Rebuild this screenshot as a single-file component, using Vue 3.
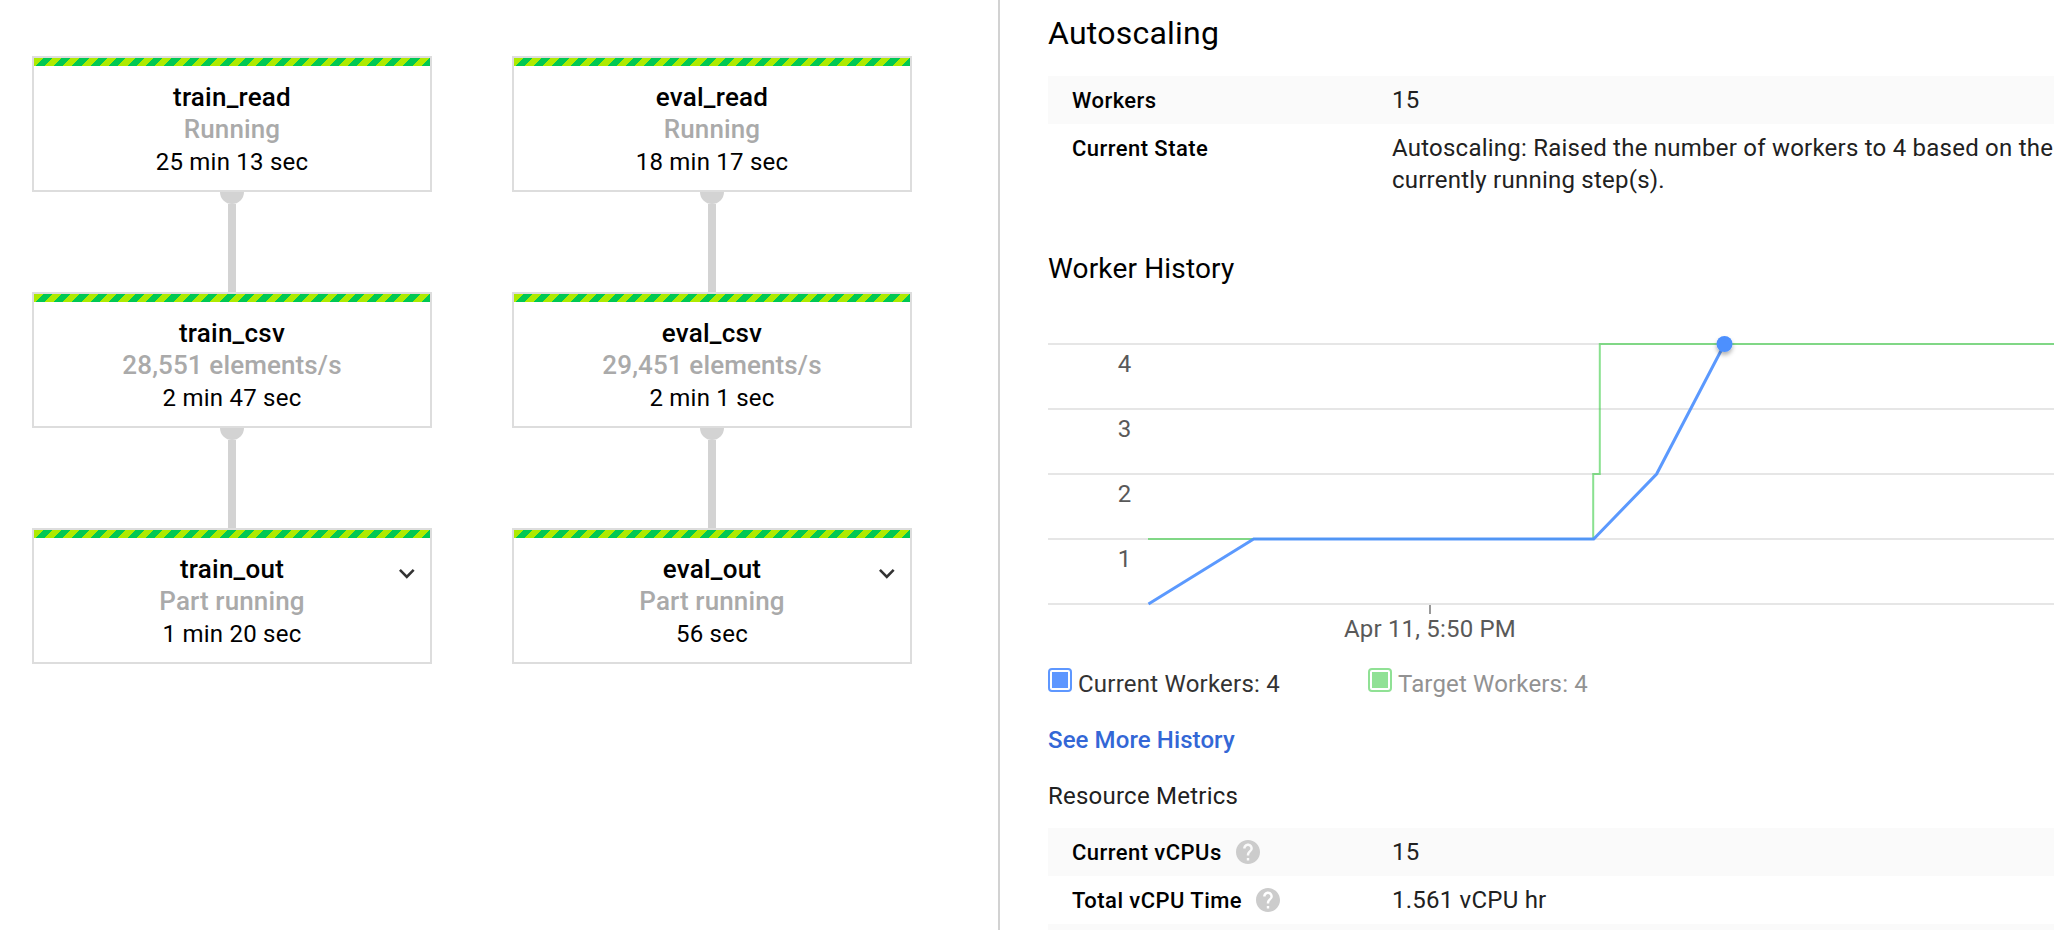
<script setup>
const pipelines = [
  [
    { name: 'train_read', status: 'Running', time: '25 min 13 sec' },
    { name: 'train_csv', status: '28,551 elements/s', time: '2 min 47 sec' },
    { name: 'train_out', status: 'Part running', time: '1 min 20 sec', expandable: true },
  ],
  [
    { name: 'eval_read', status: 'Running', time: '18 min 17 sec' },
    { name: 'eval_csv', status: '29,451 elements/s', time: '2 min 1 sec' },
    { name: 'eval_out', status: 'Part running', time: '56 sec', expandable: true },
  ],
]

const gridLines = [
  { y: 344, label: '4' },
  { y: 409, label: '3' },
  { y: 474, label: '2' },
  { y: 539, label: '1' },
  { y: 604, label: '' },
]

const metrics = [
  { label: 'Current vCPUs', value: '15' },
  { label: 'Total vCPU Time', value: '1.561 vCPU hr' },
]
</script>

<template>
  <div class="page">
    <main class="graph">
      <div v-for="(steps, p) in pipelines" :key="p" class="pipeline">
        <template v-for="(step, i) in steps" :key="step.name">
          <div v-if="i > 0" class="edge">
            <span class="port"></span>
            <span class="wire"></span>
          </div>
          <div class="step">
            <div class="stripe"></div>
            <div class="name">{{ step.name }}</div>
            <div class="status">{{ step.status }}</div>
            <div class="time">{{ step.time }}</div>
            <svg v-if="step.expandable" class="chevron" viewBox="6 8.59 12 7.41">
              <path d="M16.59 8.59L12 13.17 7.41 8.59 6 10l6 6 6-6z" fill="#333" />
            </svg>
          </div>
        </template>
      </div>
    </main>

    <aside class="details">
      <h1>Autoscaling</h1>
      <div class="row shaded">
        <span class="label">Workers</span>
        <span class="value">15</span>
      </div>
      <div class="row">
        <span class="label">Current State</span>
        <span class="value">Autoscaling: Raised the number of workers to 4 based on the<br />currently running step(s).</span>
      </div>

      <h2>Worker History</h2>
      <svg class="chart" viewBox="1048 286 1006 374">
        <defs>
          <filter id="dotShadow" x="-50%" y="-50%" width="200%" height="220%">
            <feDropShadow dx="0" dy="3" stdDeviation="2" flood-color="#000" flood-opacity="0.3" />
          </filter>
        </defs>
        <g v-for="line in gridLines" :key="line.y">
          <rect x="1048" :y="line.y - 1" width="1006" height="2" fill="#e6e6e6" />
          <text x="1131.5" :y="line.y + 28" text-anchor="end" class="tick">{{ line.label }}</text>
        </g>
        <rect x="1429" y="605" width="2" height="9" fill="#999" />
        <text x="1344" y="637" class="tick date">Apr 11, 5:50 PM</text>
        <path class="target" d="M1148 539H1593.2V474H1599.8V344H2054" />
        <path class="current" d="M1148.5 604L1253.7 539H1593.7L1656.6 474L1724.5 344" />
        <circle cx="1724.5" cy="344" r="8" fill="#4d90fe" filter="url(#dotShadow)" />
      </svg>
      <div class="legend">
        <span class="entry"><i class="swatch blue"></i>Current Workers: 4</span>
        <span class="entry muted"><i class="swatch green"></i>Target Workers: 4</span>
      </div>
      <a class="more">See More History</a>

      <h3>Resource Metrics</h3>
      <div v-for="(m, i) in metrics" :key="m.label" class="row" :class="{ shaded: i % 2 === 0 }">
        <span class="label">
          {{ m.label }}
          <svg class="help" viewBox="2 2 20 20">
            <path
              fill="#ccc"
              d="M12 2C6.48 2 2 6.48 2 12s4.480 10 10 10 10-4.480 10-10S17.520 2 12 2zm1 17h-2v-2h2v2zm2.070-7.750l-.9.920C13.450 12.900 13 13.500 13 15h-2v-.5c0-1.100.450-2.100 1.170-2.830l1.240-1.260c.370-.360.590-.860.590-1.410 0-1.100-.9-2-2-2s-2 .9-2 2H8c0-2.210 1.790-4 4-4s4 1.790 4 4c0 .880-.360 1.680-.930 2.250z"
            />
          </svg>
        </span>
        <span class="value">{{ m.value }}</span>
      </div>
      <div class="row shaded"></div>
    </aside>
  </div>
</template>

<style>
body {
  background: #fff;
}
</style>

<style scoped>
.page {
  display: flex;
  width: 2054px;
  height: 930px;
  overflow: hidden;
  background: #fff;
  font-family: Roboto, sans-serif;
  font-size: 24px;
  line-height: 32px;
  letter-spacing: 0.23px;
  color: #212121;
  white-space: nowrap;
}

.graph {
  display: flex;
  flex: none;
  gap: 80px;
  box-sizing: border-box;
  width: 998px;
  padding: 56px 32px 0;
}
.pipeline {
  width: 400px;
}
.step {
  position: relative;
  box-sizing: border-box;
  height: 136px;
  border: 2px solid #ddd;
  text-align: center;
  color: #000;
}
.stripe {
  height: 8px;
  margin-bottom: 15px;
  background: repeating-linear-gradient(135deg, #aeea00 0 6.5px, #00c853 6.5px 13px);
}
.name,
.status {
  font-size: 26px;
  font-weight: 500;
}
.status {
  letter-spacing: 0.12px;
  color: #aaa;
}
.time {
  margin-top: 1px;
}
.chevron {
  position: absolute;
  top: 39px;
  right: 15px;
  width: 15.6px;
  height: 9.63px;
}
.edge {
  display: flex;
  flex-direction: column;
  align-items: center;
  height: 100px;
}
.port {
  width: 24px;
  height: 12px;
  border-radius: 0 0 12px 12px;
  background: #d3d3d3;
}
.wire {
  flex: 1;
  width: 8px;
  background: #d3d3d3;
}

.details {
  flex: 1;
  min-width: 0;
  padding: 13px 0 0 48px;
  border-left: 2px solid #d2d2d2;
}
h1,
h2,
h3 {
  margin: 0;
  font-weight: 400;
}
h1 {
  margin-bottom: 23px;
  font-size: 32px;
  line-height: 40px;
  color: #000;
}
h2 {
  margin-top: 47px;
  font-size: 28px;
  line-height: 35px;
  letter-spacing: 0.16px;
  color: #000;
}
h3 {
  margin: 24px 0 16px;
  font-size: 24px;
}
.row {
  display: grid;
  grid-template-columns: 320px 1fr;
  align-items: start;
  min-height: 32px;
  padding: 8px 0 8px 24px;
}
.shaded {
  background: #fafafa;
}
.label {
  display: flex;
  align-items: flex-start;
  gap: 14px;
  height: 32px;
  font-size: 22px;
  font-weight: 500;
  line-height: 33px;
  letter-spacing: 0.45px;
  color: #000;
}
.help {
  width: 24px;
  height: 24px;
  margin-top: 4px;
}
.chart {
  display: block;
  width: 1006px;
  height: 374px;
}
.tick {
  font-size: 24px;
  fill: #595959;
}
.date {
  letter-spacing: 0.18px;
}
.target {
  fill: none;
  stroke: rgb(60, 205, 70);
  stroke-width: 2;
  stroke-opacity: 0.6;
}
.current {
  fill: none;
  stroke: #4d90fe;
  stroke-width: 3;
  stroke-opacity: 0.92;
}
.legend {
  display: flex;
  height: 32px;
  margin-top: 8px;
}
.entry {
  display: flex;
  width: 320px;
  color: #333;
}
.muted {
  letter-spacing: 0.16px;
  color: #929292;
}
.swatch {
  box-sizing: border-box;
  width: 24px;
  height: 24px;
  margin-right: 6px;
  padding: 2px;
  border: 2px solid;
  border-radius: 4px;
  background-clip: content-box;
}
.blue {
  border-color: #5e97ff;
  background-color: #5e97ff;
}
.green {
  border-color: #90e195;
  background-color: #90e195;
}
.more {
  display: block;
  margin-top: 24px;
  font-weight: 500;
  letter-spacing: 0.1px;
  color: #3367d6;
}
</style>
